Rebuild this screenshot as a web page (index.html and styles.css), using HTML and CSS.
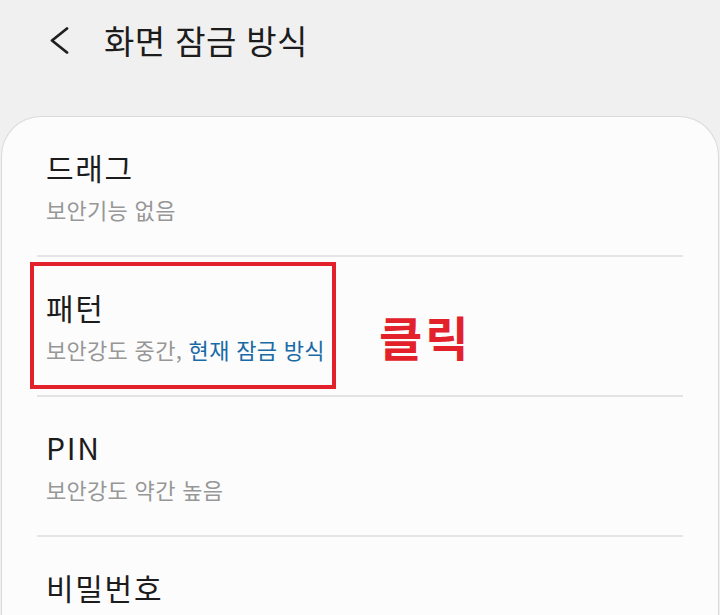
FILE: index.html
```html
<!DOCTYPE html>
<html lang="ko">
<head>
<meta charset="utf-8">
<title>화면 잠금 방식</title>
<link rel="stylesheet" href="styles.css">
</head>
<body>
<div class="screen">
  <header class="topbar">
    <button class="back" aria-label="뒤로">
      <svg width="20" height="27" viewBox="0 0 20 27"><path d="M18 1.5 L3 13.5 L18 25.5" fill="none" stroke="#1f1f1f" stroke-width="2.8" stroke-linecap="round" stroke-linejoin="round"/></svg>
    </button>
    <h1 class="title">화면 잠금 방식</h1>
  </header>
  <section class="card">
    <div class="item">
      <div class="item-title">드래그</div>
      <div class="item-sub">보안기능 없음</div>
    </div>
    <div class="divider"></div>
    <div class="item item-marked">
      <div class="item-title">패턴</div>
      <div class="item-sub">보안강도 중간, <span class="current">현재 잠금 방식</span></div>
      <div class="mark-box"></div>
      <div class="mark-label">클릭</div>
    </div>
    <div class="divider"></div>
    <div class="item">
      <div class="item-title">PIN</div>
      <div class="item-sub">보안강도 약간 높음</div>
    </div>
    <div class="divider"></div>
    <div class="item">
      <div class="item-title">비밀번호</div>
      <div class="item-sub">보안강도 높음</div>
    </div>
  </section>
</div>
</body>
</html>
```
FILE: styles.css
```css
html, body {
  margin: 0;
  padding: 0;
  background: #f0f0f0;
  height: 100%;
  overflow: hidden;
}
.screen {
  font-family: "Noto Sans CJK KR", sans-serif;
  color: #1c1c1c;
}
.topbar {
  height: 80px;
  display: flex;
  align-items: center;
  padding-left: 49px;
}
.back {
  border: 0;
  background: none;
  padding: 0;
  margin: 0;
  width: 20px;
  height: 27px;
  display: flex;
}
.title {
  margin: 0 0 0 35px;
  font-size: 33px;
  line-height: 40px;
  letter-spacing: 0.4px;
  font-weight: 400;
  color: #1c1c1c;
}
.card {
  margin: 36px 1px 0;
  background: #fcfcfc;
  border: 1px solid #dadada;
  border-bottom: none;
  border-radius: 40px 40px 0 0;
  min-height: 600px;
}
.item {
  position: relative;
  padding: 32px 44px 32px;
}
.item-title {
  font-size: 30px;
  line-height: 36px;
  letter-spacing: 1.7px;
  color: #1c1c1c;
}
.item-sub {
  margin-top: 10px;
  font-size: 22px;
  line-height: 28px;
  letter-spacing: 0.3px;
  color: #979797;
}
.current {
  color: #1a6aa6;
}
.divider {
  height: 2px;
  background: #e4e4e4;
  margin: 0 35px;
}
.mark-box {
  position: absolute;
  left: 28px;
  top: 5px;
  width: 306px;
  height: 127px;
  box-sizing: border-box;
  border: 4px solid #e3212b;
}
.mark-label {
  position: absolute;
  left: 377px;
  top: 55px;
  font-size: 47px;
  line-height: 1;
  letter-spacing: 3px;
  font-weight: 700;
  color: #e3212b;
}
```
